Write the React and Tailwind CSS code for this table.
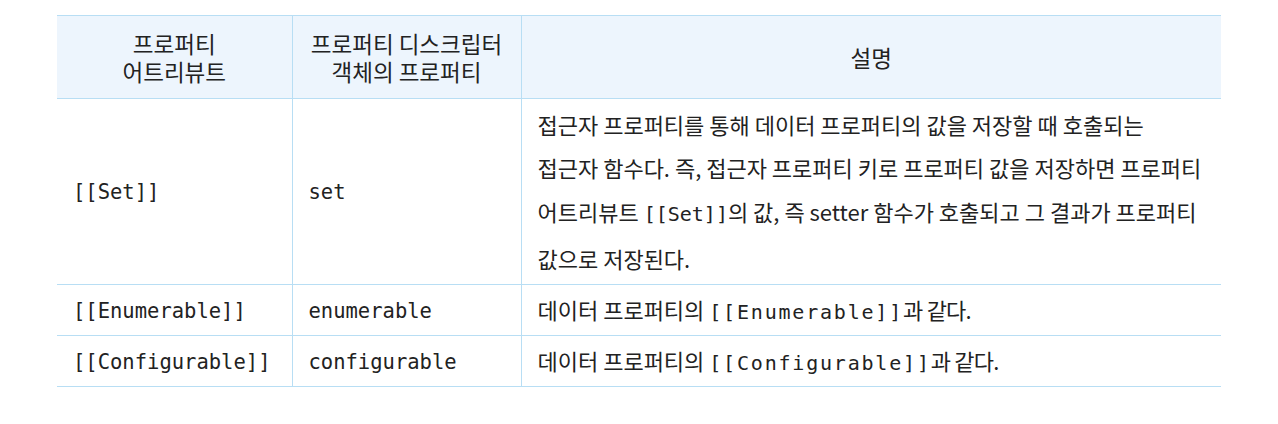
import React from "react";

function Mono({ children, className = "" }) {
  return (
    <span className={`font-['DejaVu_Sans_Mono',monospace] ${className}`}>{children}</span>
  );
}

export default function App() {
  const bd = "border-[#b8def4]";
  return (
    <div className="w-[1278px] h-[424px] bg-white pt-[15px] pl-[57px]">
      <table className="table-fixed border-collapse w-[1164px] text-[#222222] font-['Noto_Sans_CJK_KR','Noto_Sans',sans-serif]">
        <colgroup>
          <col className="w-[235px]" />
          <col className="w-[229px]" />
          <col className="w-[700px]" />
        </colgroup>
        <thead>
          <tr className="h-[83px] bg-[#edf5fd]">
            <th className={`border-t border-b ${bd} text-[22.5px] leading-[28px] font-normal text-center align-middle`}>
              <div>프로퍼티</div>
              <div>어트리뷰트</div>
            </th>
            <th className={`border-t border-b border-l ${bd} text-[22.5px] leading-[28px] font-normal text-center align-middle`}>
              <div>프로퍼티 디스크립터</div>
              <div>객체의 프로퍼티</div>
            </th>
            <th className={`border-t border-b border-l ${bd} text-[22.5px] leading-[28px] font-normal text-center align-middle`}>
              설명
            </th>
          </tr>
        </thead>
        <tbody>
          <tr className="h-[186px]">
            <td className={`border-b ${bd} px-4 align-middle text-[20.5px]`}>
              <Mono>[[Set]]</Mono>
            </td>
            <td className={`border-b border-l ${bd} px-4 align-middle text-[20.5px]`}>
              <Mono>set</Mono>
            </td>
            <td className={`border-b border-l ${bd} pl-4 pr-2 align-middle text-[22px] leading-[43.7px] whitespace-nowrap`}>
              접근자 프로퍼티를 통해 데이터 프로퍼티의 값을 저장할 때 호출되는
              <br />
              접근자 함수다. 즉, 접근자 프로퍼티 키로 프로퍼티 값을 저장하면 프로퍼티
              <br />
              어트리뷰트 <Mono className="text-[20px]">[[Set]]</Mono>의 값, 즉 setter 함수가 호출되고 그 결과가 프로퍼티
              <br />
              값으로 저장된다.
            </td>
          </tr>
          <tr className="h-[51px]">
            <td className={`border-b ${bd} px-4 align-middle text-[20.5px]`}>
              <Mono>[[Enumerable]]</Mono>
            </td>
            <td className={`border-b border-l ${bd} px-4 align-middle text-[20.5px]`}>
              <Mono>enumerable</Mono>
            </td>
            <td className={`border-b border-l ${bd} px-4 align-middle text-[22px] whitespace-nowrap`}>
              데이터 프로퍼티의 <Mono className="text-[20px] tracking-[1.8px]">[[Enumerable]]</Mono>
              <span className="tracking-[-0.8px]">과 같다.</span>
            </td>
          </tr>
          <tr className="h-[51px]">
            <td className={`border-b ${bd} px-4 align-middle text-[20.5px]`}>
              <Mono>[[Configurable]]</Mono>
            </td>
            <td className={`border-b border-l ${bd} px-4 align-middle text-[20.5px]`}>
              <Mono>configurable</Mono>
            </td>
            <td className={`border-b border-l ${bd} px-4 align-middle text-[22px] whitespace-nowrap`}>
              데이터 프로퍼티의 <Mono className="text-[20px] tracking-[1.8px]">[[Configurable]]</Mono>
              <span className="tracking-[-0.8px]">과 같다.</span>
            </td>
          </tr>
        </tbody>
      </table>
    </div>
  );
}
